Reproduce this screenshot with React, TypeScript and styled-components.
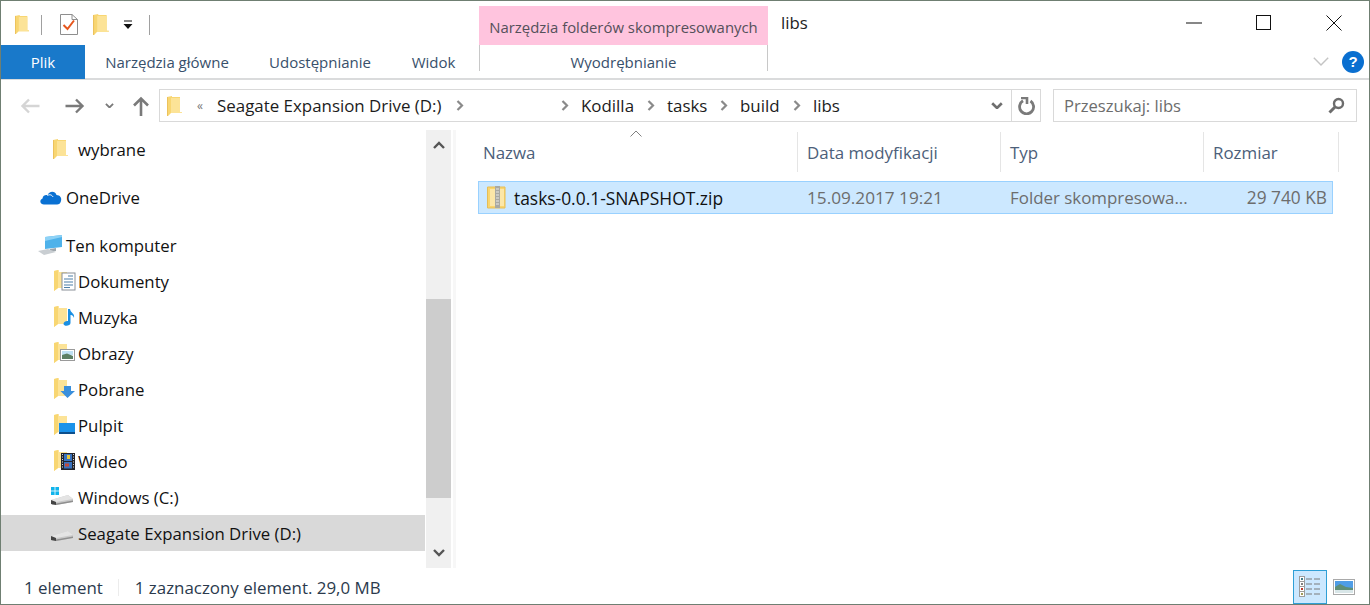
import React from "react";
import styled, { createGlobalStyle } from "styled-components";

const Global = createGlobalStyle`
  html, body { margin: 0; padding: 0; background: #fff; overflow: hidden; }
  * { box-sizing: border-box; }
`;

const Win = styled.div`
  width: 1370px; height: 605px; border: 1px solid #6f7f72; background: #fff;
  display: flex; flex-direction: column; overflow: hidden;
  font-family: "Open Sans", "Noto Sans", sans-serif; color: #1a1a1a;
`;
const TitleBar = styled.div`
  height: 44px; display: flex; align-items: stretch; flex: none;
`;
const Quick = styled.div`
  width: 478px; display: flex; align-items: center; padding: 3px 0 0 14px; flex: none;
`;
const QuickSep = styled.span<{ $ml: number; $mr: number }>`
  width: 1px; height: 20px; background: #a0a0a0; margin: 0 ${p => p.$mr}px 0 ${p => p.$ml}px;
`;
const QuickGap = styled.span<{ $w: number }>`
  width: ${p => p.$w}px; flex: none;
`;
const ContextTitle = styled.div`
  width: 289px; margin-top: 5px; padding-top: 2px; background: #ffc4de; color: #54505a; font-size: 14.9px;
  display: flex; align-items: center; justify-content: center; flex: none;
`;
const WinTitle = styled.div`
  margin-left: 13px; font-size: 16.8px; padding-top: 10px; flex: 1; color: #222;
`;
const WinBtn = styled.div`
  width: 70px; display: flex; align-items: center; justify-content: center;
`;
const TabRow = styled.div`
  height: 35px; display: flex; border-bottom: 2px solid #dadbdc; flex: none;
`;
const FileTab = styled.div`
  width: 84px; height: 34px; background: #1979ca; color: #fff; font-size: 15px;
  display: flex; align-items: center; justify-content: center; flex: none;
`;
const Tab = styled.div<{ $w: number }>`
  width: ${p => p.$w}px; height: 33px; color: #38506b; font-size: 15px; flex: none;
  display: flex; align-items: center; justify-content: center;
`;
const CtxTab = styled(Tab)`
  border-left: 1px solid #c8c8c8; border-right: 1px solid #c8c8c8; height: 26px; padding-top: 7px; margin-left: 3px; overflow: visible;
`;
const Spacer = styled.div` flex: 1; `;
const RibbonEnd = styled.div`
  display: flex; align-items: center; gap: 12px; margin-right: 5px; height: 33px;
`;
const Help = styled.div`
  width: 22px; height: 22px; border-radius: 50%; background: #0a6fd0; color: #fff; font-size: 15px; font-weight: 700;
  display: flex; align-items: center; justify-content: center; font-family: "Liberation Sans", sans-serif;
`;
const NavBar = styled.div`
  height: 50px; display: flex; align-items: center; padding-top: 1px; flex: none;
`;
const NavBtn = styled.div<{ $w: number }>`
  width: ${p => p.$w}px; display: flex; justify-content: center; align-items: center; flex: none;
`;
const Address = styled.div`
  width: 882px; height: 33px; border: 1px solid #d9d9d9; margin-left: 5px; display: flex; align-items: center; flex: none; font-size: 16.9px;
`;
const Crumb = styled.span<{ $w: number; $pl?: number }>`
  width: ${p => p.$w}px; padding-left: ${p => p.$pl ?? 0}px; flex: none; white-space: nowrap; color: #1c1c1c;
`;
const Angle = styled(Crumb)`
  font-size: 12px; color: #777;
`;
const CrumbGap = styled.span`
  width: 97px; flex: none;
`;
const AddressDrop = styled.span`
  margin-left: auto; margin-right: 8px; display: flex;
`;
const Refresh = styled.div`
  width: 29px; height: 100%; border-left: 1px solid #d9d9d9; display: flex; align-items: center; justify-content: center; flex: none;
`;
const Search = styled.div`
  width: 304px; height: 33px; margin-left: 12px; border: 1px solid #d9d9d9; display: flex; align-items: center; justify-content: space-between;
  padding: 0 11px 0 10px; color: #6d6d6d; font-size: 16.6px; flex: none;
`;
const Main = styled.div`
  flex: 1; display: flex; min-height: 0;
`;
const Tree = styled.div`
  width: 424px; padding-top: 1px; flex: none;
`;
const TreeRow = styled.div<{ $sel?: boolean; $gap?: boolean; $indent: number }>`
  height: 36px; display: flex; align-items: center; padding-left: ${p => p.$indent}px;
  background: ${p => (p.$sel ? "#d9d9d9" : "transparent")}; margin-bottom: ${p => (p.$gap ? 12 : 0)}px;
  font-size: 16.8px; color: #111;
`;
const TreeIcon = styled.span<{ $w: number }>`
  width: ${p => p.$w}px; height: 24px; display: flex; align-items: center; flex: none;
`;
const Scroll = styled.div`
  width: 25px; height: 438px; background: #f0f0f0; display: flex; flex-direction: column; flex: none; margin-left: 1px;
`;
const ScrollArrow = styled.div`
  height: 30px; display: flex; align-items: center; justify-content: center; flex: none;
`;
const ScrollTrack = styled.div`
  flex: 1; padding-top: 139px; padding-bottom: 40px; display: flex;
`;
const ScrollThumb = styled.div`
  flex: 1; background: #cdcdcd;
`;
const Divider = styled.div`
  width: 3px; height: 438px; background: #f7f7f7; margin-left: 2px; flex: none;
`;
const ListArea = styled.div`
  flex: 1; padding-left: 22px; position: relative;
`;
const Header = styled.div`
  height: 42px; display: flex; margin-bottom: 9px; padding-top: 2px;
`;
const HeadCell = styled.div<{ $w: number; $pl: number }>`
  width: ${p => p.$w}px; flex: none; padding-left: ${p => p.$pl}px; display: flex; align-items: center; color: #4c607a; font-size: 16.9px;
  border-right: 1px solid #e5e5e5; height: 40px;
`;
const SortCaret = styled.span`
  position: absolute; left: 174px; top: 0; display: flex;
`;
const FileRow = styled.div`
  width: 855px; height: 33px; background: #cce8ff; border: 1px solid #99d1ff; display: flex; align-items: center; font-size: 16.9px;
`;
const FileCell = styled.div<{ $w: number; $dim?: boolean; $right?: boolean }>`
  width: ${p => p.$w}px; flex: none; white-space: nowrap; overflow: hidden;
  color: ${p => (p.$dim ? "#6d6d6d" : "#111")}; text-align: ${p => (p.$right ? "right" : "left")};
`;
const NameCell = styled(FileCell)`
  display: flex; align-items: center; gap: 8px; padding-left: 8px; font-size: 17.4px;
`;
const DateCell = styled(FileCell)`
  font-size: 17.2px;
`;
const SizeCell = styled(FileCell)`
  font-size: 17.3px;
`;
const Status = styled.div`
  height: 35px; display: flex; align-items: center; flex: none; font-size: 16.9px; color: #2b3a4d; padding: 1px 0 0 23px;
`;
const StatusSep = styled.span`
  width: 1px; height: 17px; background: #ececec; margin: 0 16px 0 15px;
`;
const ViewBtn = styled.div<{ $on?: boolean }>`
  width: 34px; height: 34px; display: flex; align-items: center; justify-content: center; flex: none;
  background: ${p => (p.$on ? "#cce8ff" : "transparent")}; border: ${p => (p.$on ? "1px solid #2f9fd6" : "none")};
`;
const ViewGroup = styled.div`
  margin-left: auto; display: flex; margin-right: 8px; align-self: flex-end;
`;

const Folder = ({ h = 20 }: { h?: number }) => (
  <svg width={h * 0.75} height={h} viewBox="0 0 15 20">
    <path d="M0 1 L5 0 V1 H13 V16 L15 16 V17 H4 L1 20 H0 Z" fill="#f8d672" />
    <path d="M4 2 H13 V16 H15 V17 H4 Z" fill="#fce397" />
    <path d="M0.5 1 V20" stroke="#ecc25c" strokeWidth="1" />
  </svg>
);

const Back = ({ c }: { c: string }) => (
  <svg width="20" height="16" viewBox="0 0 20 16"><path d="M19.5 8 H3 M9 1.5 L2.5 8 L9 14.5" fill="none" stroke={c} strokeWidth="2.4" /></svg>
);
const Fwd = ({ c }: { c: string }) => (
  <svg width="20" height="16" viewBox="0 0 20 16"><path d="M0.5 8 H17 M11 1.5 L17.5 8 L11 14.5" fill="none" stroke={c} strokeWidth="2.4" /></svg>
);
const Up = () => (
  <svg width="18" height="20" viewBox="0 0 18 20"><path d="M9 20 V3 M2 9.5 L9 2.5 L16 9.5" fill="none" stroke="#7a7a7a" strokeWidth="2.6" /></svg>
);
const Chev = ({ w = 10, c = "#7a7a7a", sw = 2 }: { w?: number; c?: string; sw?: number }) => (
  <svg width={w} height={w * 0.6} viewBox="0 0 10 6"><path d="M1 1 L5 5 L9 1" fill="none" stroke={c} strokeWidth={sw} /></svg>
);
const Sep = () => (
  <svg width="8" height="11" viewBox="0 0 8 11" style={{ flex: "none" }}><path d="M1.5 1 L6 5.5 L1.5 10" fill="none" stroke="#8a8a8a" strokeWidth="2.2" /></svg>
);

const Overlay = ({ children }: { children: React.ReactNode }) => (
  <svg width="24" height="22" viewBox="0 0 24 22">
    <path d="M1 1 L6 0 V2 H14 V18 H5 L1 21 Z" fill="#fce397" />
    <path d="M1 1 L5 0 V18 L1 21 Z" fill="#f8d672" />
    {children}
  </svg>
);
const Drive = ({ win }: { win?: boolean }) => (
  <svg width="24" height="20" viewBox="0 0 24 20">
    {win && <g fill="#10b4ec"><rect x="1" y="0" width="3.6" height="3.6" /><rect x="5.4" y="0" width="3.6" height="3.6" /><rect x="1" y="4.4" width="3.6" height="3.6" /><rect x="5.4" y="4.4" width="3.6" height="3.6" /></g>}
    <path d="M1 13 L18 8 L23 12 V15 L6 18 H2 Z" fill="#c9c9c9" />
    <path d="M1 13 L6 15 L23 12 L18 8 Z" fill="#e4e4e4" />
    <path d="M1 13 L6 15 V18 L1 17 Z" fill="#444" />
    <path d="M6 16.5 L23 13.5 V15 L6 18 Z" fill="#8f8f8f" />
  </svg>
);

const tree = [
  { label: "wybrane", indent: 52, w: 25, icon: <Folder />, gap: true },
  {
    label: "OneDrive", indent: 38, w: 27, gap: true,
    icon: <svg width="23" height="15" viewBox="0 0 23 15"><path d="M5 14.5 C1 14.5 0 10 3.5 8.5 C4 5 7.5 4.5 8.5 5.5 C10 1 16 0.5 17.5 5 C21 5 23 8 22 11 C21.5 13.5 20 14.5 18 14.5 Z" fill="#0a71d3" /><path d="M8.5 5.5 C11 4 13 5 14 7" stroke="#fff" fill="none" /></svg>,
  },
  {
    label: "Ten komputer", indent: 37, w: 28, gap: false,
    icon: <svg width="25" height="21" viewBox="0 0 25 21"><path d="M7 2 L24 0 V12 L7 14 Z" fill="#4fb2ea" /><path d="M7 2 L24 0 V2 L7 6 Z" fill="#8ed2f6" /><path d="M12 14 L18 13 L18 16 L11 17 Z" fill="#9fa6ac" /><path d="M0 16 L10 14 L18 17 L6 20 Z" fill="#c9ced2" /></svg>,
  },
  {
    label: "Dokumenty", indent: 52, w: 25, gap: false,
    icon: <Overlay><rect x="9" y="3" width="13" height="17" fill="#fff" stroke="#8a9098" /><path d="M15 6 H20 M11 9 H20 M11 12 H20 M11 15 H20 M11 17.5 H17" stroke="#4d7fa8" strokeWidth="1.2" /></Overlay>,
  },
  {
    label: "Muzyka", indent: 52, w: 25, gap: false,
    icon: <Overlay><path d="M15 3 H17 C17.5 7 22 7 21 12 C20 9 18.5 9 17.5 9 V17 C17.5 20 11 21 10.5 18 C10.5 15.5 13.5 14.5 15 15 Z" fill="#1a8fe3" /></Overlay>,
  },
  {
    label: "Obrazy", indent: 52, w: 25, gap: false,
    icon: <Overlay><rect x="7.5" y="7.5" width="14" height="11" fill="#fff" stroke="#9a9a9a" /><rect x="9" y="9" width="11" height="4" fill="#bfe0f2" /><path d="M9 13 L14 11.5 L20 14 V17 H9 Z" fill="#5d7f63" /></Overlay>,
  },
  {
    label: "Pobrane", indent: 52, w: 25, gap: false,
    icon: <Overlay><path d="M11 8 H18 V13 H22 L14.5 20 L7.5 13 H11 Z" fill="#3a8fdc" /></Overlay>,
  },
  {
    label: "Pulpit", indent: 52, w: 25, gap: false,
    icon: <Overlay><rect x="6" y="9" width="16" height="10" fill="#1a92ea" /><rect x="6" y="18" width="16" height="2" fill="#0d4f8c" /></Overlay>,
  },
  {
    label: "Wideo", indent: 52, w: 25, gap: false,
    icon: <Overlay><rect x="8" y="3" width="14" height="17" fill="#23242a" /><path d="M9 4.5 H10 M9 7 H10 M9 9.5 H10 M9 12 H10 M9 14.5 H10 M9 17 H10 M20 4.5 H21 M20 7 H21 M20 9.5 H21 M20 12 H21 M20 14.5 H21 M20 17 H21" stroke="#d8d8d8" /><rect x="11" y="4" width="8" height="7" fill="#3973bf" /><rect x="11" y="12" width="8" height="6.5" fill="#3973bf" /><rect x="14" y="5" width="3" height="4" fill="#e8c83a" /><rect x="12" y="13.5" width="4" height="3" fill="#c24b3a" /></Overlay>,
  },
  { label: "Windows (C:)", indent: 49, w: 28, gap: false, icon: <Drive win /> },
  { label: "Seagate Expansion Drive (D:)", indent: 49, w: 28, gap: false, icon: <Drive />, sel: true },
];

export default function App() {
  return (
    <Win>
      <Global />
      <TitleBar>
        <Quick>
          <Folder h={19} />
          <QuickSep $ml={12} $mr={18} />
          <svg width="18" height="21" viewBox="0 0 18 21">
            <path d="M0.5 0.5 H12 L17.5 5.5 V20.5 H0.5 Z" fill="#fff" stroke="#8e8e8e" />
            <path d="M12 0.5 V5.5 H17.5" fill="none" stroke="#8e8e8e" />
            <path d="M3.5 11 L7.5 15 L14 6.5" fill="none" stroke="#e6561d" strokeWidth="2" />
          </svg>
          <QuickGap $w={15} />
          <Folder h={21} />
          <QuickGap $w={14} />
          <svg width="10" height="10" viewBox="0 0 10 10"><path d="M1 0.5 H9 V1.5 H1 Z M0.5 4 H9.5 L5 9 Z" fill="#111" /></svg>
          <QuickSep $ml={16} $mr={0} />
        </Quick>
        <ContextTitle>Narzędzia folderów skompresowanych</ContextTitle>
        <WinTitle>libs</WinTitle>
        <WinBtn><svg width="16" height="2" viewBox="0 0 16 2"><rect width="16" height="1" y="0.5" fill="#111" /></svg></WinBtn>
        <WinBtn><svg width="16" height="16" viewBox="0 0 16 16"><rect x="0.5" y="0.5" width="14" height="14" fill="none" stroke="#111" /></svg></WinBtn>
        <WinBtn><svg width="16" height="16" viewBox="0 0 16 16"><path d="M0.5 0.5 L15.5 15.5 M15.5 0.5 L0.5 15.5" stroke="#111" /></svg></WinBtn>
      </TitleBar>
      <TabRow>
        <FileTab>Plik</FileTab>
        <Tab $w={164}>Narzędzia główne</Tab>
        <Tab $w={142}>Udostępnianie</Tab>
        <Tab $w={85}>Widok</Tab>
        <CtxTab $w={289}>Wyodrębnianie</CtxTab>
        <Spacer />
        <RibbonEnd>
          <Chev w={18} c="#c4c4c4" sw={0.8} />
          <Help>?</Help>
        </RibbonEnd>
      </TabRow>
      <NavBar>
        <NavBtn $w={58}><Back c="#d5d5d5" /></NavBtn>
        <NavBtn $w={32}><Fwd c="#7a7a7a" /></NavBtn>
        <NavBtn $w={36}><Chev w={9} c="#7a7a7a" /></NavBtn>
        <NavBtn $w={27}><Up /></NavBtn>
        <Address>
          <NavBtn $w={28}><Folder h={20} /></NavBtn>
          <Angle $w={29} $pl={9}>«</Angle>
          <Crumb $w={239}>Seagate Expansion Drive (D:)</Crumb>
          <Sep />
          <CrumbGap />
          <Sep />
          <Crumb $w={78} $pl={12}>Kodilla</Crumb>
          <Sep />
          <Crumb $w={65} $pl={12}>tasks</Crumb>
          <Sep />
          <Crumb $w={65} $pl={12}>build</Crumb>
          <Sep />
          <Crumb $w={44} $pl={12}>libs</Crumb>
          <AddressDrop><Chev w={12} c="#6f6f6f" sw={2.2} /></AddressDrop>
          <Refresh>
            <svg width="17" height="18" viewBox="0 0 17 18"><path d="M5 3.8 A7 7 0 1 0 12.5 4" fill="none" stroke="#7a7a7a" strokeWidth="2.8" /><path d="M3 1 H9 V7" fill="none" stroke="#7a7a7a" strokeWidth="2.6" /></svg>
          </Refresh>
        </Address>
        <Search>
          Przeszukaj: libs
          <svg width="17" height="17" viewBox="0 0 17 17"><circle cx="10.5" cy="6.5" r="4.5" fill="none" stroke="#6d6d6d" strokeWidth="2.4" /><path d="M7 10 L1.5 15.5" stroke="#6d6d6d" strokeWidth="3" /></svg>
        </Search>
      </NavBar>
      <Main>
        <Tree>
          {tree.map(t => (
            <TreeRow key={t.label} $indent={t.indent} $gap={t.gap} $sel={t.sel}>
              <TreeIcon $w={t.w}>{t.icon}</TreeIcon>
              {t.label}
            </TreeRow>
          ))}
        </Tree>
        <Scroll>
          <ScrollArrow><svg width="12" height="8" viewBox="0 0 12 8"><path d="M1 7 L6 2 L11 7" fill="none" stroke="#555" strokeWidth="2.4" /></svg></ScrollArrow>
          <ScrollTrack><ScrollThumb /></ScrollTrack>
          <ScrollArrow><svg width="12" height="8" viewBox="0 0 12 8"><path d="M1 1 L6 6 L11 1" fill="none" stroke="#555" strokeWidth="2.4" /></svg></ScrollArrow>
        </Scroll>
        <Divider />
        <ListArea>
          <SortCaret>
            <svg width="12" height="7" viewBox="0 0 12 7"><path d="M0.5 6.5 L6 1 L11.5 6.5" fill="none" stroke="#808080" /></svg>
          </SortCaret>
          <Header>
            <HeadCell $w={320} $pl={5}>Nazwa</HeadCell>
            <HeadCell $w={203} $pl={9}>Data modyfikacji</HeadCell>
            <HeadCell $w={203} $pl={9}>Typ</HeadCell>
            <HeadCell $w={135} $pl={9}>Rozmiar</HeadCell>
          </Header>
          <FileRow>
            <NameCell $w={328}>
              <svg width="19" height="23" viewBox="0 0 19 23" style={{ flex: "none" }}>
                <path d="M0.5 1 H18 V22 H0.5 Z" fill="#f9d56e" stroke="#e6bd56" />
                <path d="M3 3 H17 V20 H3 Z" fill="#fce7a8" />
                <rect x="8" y="0" width="5" height="22" fill="#a9a9a2" />
                <path d="M9 3 H12 M9 6 H12 M9 9 H12 M9 12 H12 M9 15 H12 M9 18 H12" stroke="#e8e8e4" />
              </svg>
              tasks-0.0.1-SNAPSHOT.zip
            </NameCell>
            <DateCell $w={203} $dim>15.09.2017 19:21</DateCell>
            <FileCell $w={200} $dim>Folder skompresowa...</FileCell>
            <SizeCell $w={117} $dim $right>29 740 KB</SizeCell>
          </FileRow>
        </ListArea>
      </Main>
      <Status>
        1 element
        <StatusSep />
        1 zaznaczony element. 29,0 MB
        <ViewGroup>
          <ViewBtn $on>
            <svg width="22" height="22" viewBox="0 0 22 22">
              <g fill="#fff" stroke="#9c9c9c"><rect x="0.5" y="0.5" width="5" height="5" /><rect x="0.5" y="5.5" width="5" height="5" /><rect x="0.5" y="10.5" width="5" height="5" /><rect x="0.5" y="15.5" width="5" height="5" /></g>
              <rect x="2" y="2" width="2" height="2" fill="#3f7d8a" /><rect x="2" y="7" width="2" height="2" fill="#7f7f7f" /><rect x="2" y="12" width="2" height="2" fill="#c0392b" /><rect x="2" y="17" width="2" height="2" fill="#a09a5a" />
              <path d="M7 3 H13 M15 3 H21 M7 8 H13 M15 8 H21 M7 13 H13 M15 13 H21 M7 18 H13 M15 18 H21" stroke="#7a7a7a" />
            </svg>
          </ViewBtn>
          <ViewBtn>
            <svg width="22" height="16" viewBox="0 0 22 16">
              <rect x="0.5" y="0.5" width="21" height="15" fill="#fff" stroke="#a9a9a9" />
              <rect x="2" y="2" width="18" height="8" fill="#4f9de6" />
              <path d="M2 8 L7 5 L13 8 L20 9 V11 H2 Z" fill="#5f8f78" />
              <rect x="2" y="11" width="18" height="3" fill="#d8e6e8" />
            </svg>
          </ViewBtn>
        </ViewGroup>
      </Status>
    </Win>
  );
}
